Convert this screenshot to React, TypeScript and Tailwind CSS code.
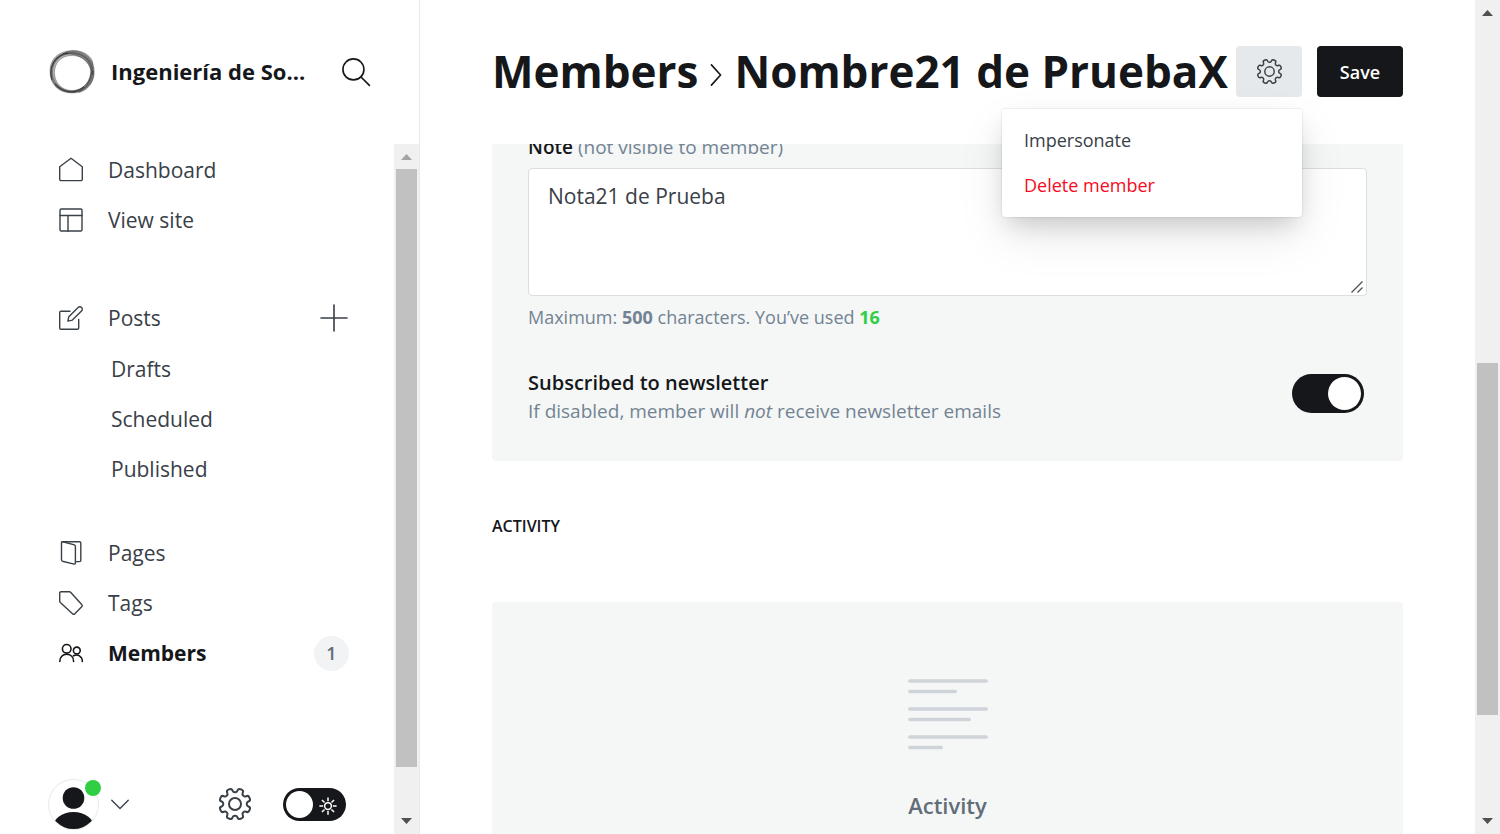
import { useState } from "react";
import type { ReactNode } from "react";

const GEAR_POINTS = Array.from({ length: 8 }, (_, tooth) => {
  const center = 22.5 + tooth * 45;
  return [
    [center - 10, 12],
    [center + 10, 12],
    [center + 14, 8.9],
    [center + 31, 8.9],
  ];
})
  .flat()
  .map(([deg, r]) => {
    const a = (deg * Math.PI) / 180;
    return [12 + r * Math.cos(a), 12 + r * Math.sin(a)];
  });

const GEAR_PATH =
  GEAR_POINTS.map((p, i) => {
    const prev = GEAR_POINTS[(i + 31) % 32];
    const next = GEAR_POINTS[(i + 1) % 32];
    const a = [p[0] + (prev[0] - p[0]) * 0.42, p[1] + (prev[1] - p[1]) * 0.42];
    const b = [p[0] + (next[0] - p[0]) * 0.42, p[1] + (next[1] - p[1]) * 0.42];
    return `${i === 0 ? "M" : "L"}${a[0].toFixed(2)} ${a[1].toFixed(2)}Q${p[0].toFixed(2)} ${p[1].toFixed(2)} ${b[0].toFixed(2)} ${b[1].toFixed(2)}`;
  }).join("") + "Z";

function Icon({ className, width = 1.4, children }: { className: string; width?: number; children: ReactNode }) {
  return (
    <svg
      viewBox="0 0 24 24"
      className={`overflow-visible ${className}`}
      fill="none"
      stroke="currentColor"
      strokeWidth={width}
      strokeLinecap="round"
      strokeLinejoin="round"
      aria-hidden="true"
    >
      {children}
    </svg>
  );
}

function GearIcon({ className, width }: { className: string; width?: number }) {
  return (
    <Icon className={className} width={width}>
      <path d={GEAR_PATH} />
      <circle cx="12" cy="12" r="4.500" />
    </Icon>
  );
}

function Logo() {
  return (
    <svg viewBox="0 0 46 46" className="size-[46px] shrink-0" fill="none" role="img" aria-label="Site logo">
      <g fill="#444" fillRule="evenodd" fillOpacity=".4" stroke="#222" strokeOpacity=".45" strokeWidth=".7">
        <path d="M1 22C1 8 12 1.500 25 1.500c9 0 19 6 19 14 2 6 2 14-3 20-5 6-12 8.500-18 8.500C9 44 1 35 1 22ZM3.500 23C3.500 34 12 42 22.500 42S42 33 42.500 22C42.500 12 34 4.500 23 4.500S3.500 12 3.500 23Z" />
        <path d="M2 26C1 12 9 4 22 3.500c11 0 20 6 21.500 16C45 32 36 43.500 23.500 43.500 12 43.500 3 36 2 26ZM5.500 23.500C5.500 34 13 41.500 23 41.500c9 0 17-6 18.500-17C42.500 13 33 6.500 23 6.500 12 6.500 5.500 14 5.500 23.500Z" />
        <path d="M14 5C22-1 38 2 43.500 14c1 4 1 8 0 12C42 15 33 6 22 5c-3 0-5-.5-8 0Z" />
        <path d="M44.500 22c1 11-6 20-15 21.500C36 39 41.500 33 42 24Z" />
      </g>
      <path d="M3 31C-1 18 6 6 19 4M6 35c8 9 20 10.500 29 3" stroke="#222" strokeWidth="1.300" opacity=".65" />
    </svg>
  );
}

function Scrollbar({ arrowClass, thumb }: { arrowClass: string; thumb: ReactNode }) {
  return (
    <div className="flex w-[25px] shrink-0 flex-col items-center bg-[#f0f0f0]" aria-hidden="true">
      <svg viewBox="0 0 25 25" className="size-[25px] shrink-0">
        <path d="M7 16L12.500 10L18 16Z" className={arrowClass} />
      </svg>
      <div className="flex w-full flex-1 flex-col px-0.5">{thumb}</div>
      <svg viewBox="0 0 25 25" className="size-[25px] shrink-0">
        <path d="M7 9L12.500 15L18 9Z" fill="#505050" />
      </svg>
    </div>
  );
}

function NavItem({ icon, label, active, children }: { icon: ReactNode; label: string; active?: boolean; children?: ReactNode }) {
  return (
    <li className="flex h-[50px] items-center">
      <a
        href="#"
        className={`flex flex-1 items-center gap-6 ${active ? "font-bold text-[#15171a]" : "text-[#394047]"}`}
      >
        {icon}
        <span className="pt-0.5">{label}</span>
      </a>
      {children}
    </li>
  );
}

function Sidebar() {
  const [night, setNight] = useState(false);
  return (
    <aside className="flex w-[420px] shrink-0 flex-col border-r border-[#e6e9eb]">
      <div className="flex h-36 shrink-0 items-center pr-[49px] pl-[49px]">
        <Logo />
        <span className="ml-4 pb-0.5 text-[22px] font-bold whitespace-nowrap text-[#15171a]">Ingeniería de So...</span>
        <button type="button" aria-label="Search" className="ml-auto text-[#15171a]">
          <Icon className="size-7" width={1.4}>
            <circle cx="9.800" cy="9.800" r="9" />
            <path d="M16.300 16.300l7.200 7.200" />
          </Icon>
        </button>
      </div>
      <div className="flex min-h-0 flex-1">
        <div className="flex min-w-0 flex-1 flex-col justify-between">
          <nav className="pr-[45px] pl-[59px] pt-px text-[21px] text-[#394047]">
            <ul>
              <NavItem
                label="Dashboard"
                icon={
                  <Icon className="size-6 mr-px">
                    <path d="M.7 8.700L12 .3l11.300 8.400v12.500a1.400 1.400 0 0 1-1.400 1.400H2.100A1.400 1.400 0 0 1 .7 21.200Z" />
                  </Icon>
                }
              />
              <NavItem
                label="View site"
                icon={
                  <Icon className="size-6 mr-px">
                    <rect x="1" y="1" width="22" height="22" rx="1.200" />
                    <path d="M1 7.500h22M9 7.500V23" />
                  </Icon>
                }
              />
            </ul>
            <ul className="mt-12">
              <NavItem
                label="Posts"
                icon={
                  <Icon className="size-6 mr-px">
                    <path d="M11 5.300H2A1.300 1.300 0 0 0 .7 6.600V22A1.300 1.300 0 0 0 2 23.300h16.400a1.300 1.300 0 0 0 1.300-1.300v-8.500" />
                    <path d="M13.400 14.100l-4.500 1 .9-4.400 9.300-9.200a2.200 2.200 0 0 1 3.400 0 2.200 2.200 0 0 1 0 3.400Z" />
                  </Icon>
                }
              >
                <button type="button" aria-label="New post" className="text-[#394047]">
                  <Icon className="size-[30px]" width={1.3}>
                    <path d="M12 1.600v20.800M1.600 12h20.800" />
                  </Icon>
                </button>
              </NavItem>
              {["Drafts", "Scheduled", "Published"].map((name) => (
                <li key={name} className="flex h-[50px] items-center pt-1 pl-[52px]">
                  <a href="#">{name}</a>
                </li>
              ))}
            </ul>
            <ul className="mt-[35px]">
              <NavItem
                label="Pages"
                icon={
                  <Icon className="size-6 mr-px">
                    <path d="M3 .8h17.500a1.300 1.300 0 0 1 1.300 1.300v17.200a1.300 1.300 0 0 1-1.300 1.300h-4" />
                    <path d="M2.500 1.500A1 1 0 0 1 3.800.8l11.600 3.100a1.400 1.400 0 0 1 1 1.300v16.900a1 1 0 0 1-1.200 1L3.400 20.200a1.300 1.300 0 0 1-.9-1.300Z" />
                  </Icon>
                }
              />
              <NavItem
                label="Tags"
                icon={
                  <Icon className="size-6 mr-px">
                    <path d="M2 .7h8.200a2 2 0 0 1 1.400.6L22.900 13.700a1.300 1.300 0 0 1 0 1.800l-7.300 7.400a1.300 1.300 0 0 1-1.800 0L1.300 11.400a2 2 0 0 1-.6-1.400V2A1.300 1.300 0 0 1 2 .7Z" />
                  </Icon>
                }
              />
              <NavItem
                label="Members"
                active
                icon={
                  <Icon className="size-6 mr-px" width={1.6}>
                    <circle cx="7.700" cy="7.800" r="4.300" />
                    <path d="M.8 20.500c0-4.300 2.800-7.300 6.900-7.300s6.900 3 6.900 7.300" />
                    <circle cx="17.800" cy="9.500" r="3.400" />
                    <path d="M14.500 14.800c4.200-2.200 8.800.5 8.800 5.700" />
                  </Icon>
                }
              >
                <span className="flex size-[35px] items-center justify-center rounded-full bg-[#f1f3f4] text-lg font-semibold text-[#626d79]">
                  1
                </span>
              </NavItem>
            </ul>
          </nav>
          <div className="flex h-[60px] items-center pr-12 pl-12">
            <button type="button" aria-label="Account" className="flex items-center gap-3 text-[#394047]">
              <span className="relative block">
                <svg viewBox="0 0 51 51" className="size-[51px]" aria-hidden="true">
                  <clipPath id="avatar-clip">
                    <circle cx="25.500" cy="25.500" r="24.500" />
                  </clipPath>
                  <circle cx="25.500" cy="25.500" r="25" fill="#fff" stroke="#e6e9eb" />
                  <g fill="#15171a" clipPath="url(#avatar-clip)">
                    <circle cx="25.500" cy="19" r="10.800" />
                    <ellipse cx="25.500" cy="49" rx="21" ry="16" />
                  </g>
                </svg>
                <span className="absolute -right-0.5 top-px size-4 rounded-full bg-[#30cf43]" />
              </span>
              <Icon className="size-[18px]" width={1.8}>
                <path d="M1 7l11 11L23 7" />
              </Icon>
            </button>
            <button type="button" aria-label="Settings" className="mr-8 ml-auto text-[#394047]">
              <GearIcon className="size-8" width={1.5} />
            </button>
            <label className="flex h-[33px] w-[63px] cursor-pointer items-center justify-between rounded-full bg-[#15171a] px-[3px] has-focus-visible:ring-2">
              <input
                type="checkbox"
                className="sr-only"
                aria-label="Night shift"
                checked={night}
                onChange={(e) => setNight(e.target.checked)}
              />
              <span className="size-[27px] rounded-full bg-white" />
              <Icon className="mt-[3px] mr-1.5 size-[18px] text-white" width={2}>
                <circle cx="12" cy="12" r="4.500" />
                <path
                  strokeLinecap="butt"
                  d="M12 .5v5M12 18.500v5M.5 12h5M18.500 12h5M3.900 3.900l3.500 3.500M16.600 16.600l3.500 3.500M3.900 20.100l3.500-3.500M16.600 7.400l3.500-3.500"
                />
              </Icon>
            </label>
          </div>
        </div>
        <Scrollbar arrowClass="fill-[#a3a3a3]" thumb={<div className="h-[598px] bg-[#c1c1c1]" />} />
      </div>
    </aside>
  );
}

function Header() {
  return (
    <header className="flex h-36 shrink-0 items-center justify-between px-[72px] pb-0.5">
      <h1 className="flex items-center text-[44px] font-bold whitespace-nowrap text-[#15171a]">
        <a href="#">Members</a>
        <Icon className="mx-[7px] mt-2 size-[22px] shrink-0" width={1.8}>
          <path d="M7 1l10 11L7 23" />
        </Icon>
        <span>Nombre21 de PruebaX</span>
      </h1>
      <div className="flex gap-[15px]">
        <div className="relative">
          <button
            type="button"
            aria-label="Member actions"
            aria-expanded="true"
            className="flex h-[51px] w-[66px] items-center justify-center rounded bg-[#e6e9eb] text-[#394047]"
          >
            <GearIcon className="size-[25px]" width={1.4} />
          </button>
          <ul className="absolute top-full right-0 z-10 mt-3 w-[300px] rounded bg-white py-[9px] text-lg text-[#394047] shadow-[0_0_1px_1px_rgba(0,0,0,0.06),0_12px_24px_-6px_rgba(0,0,0,0.18),0_20px_50px_rgba(0,0,0,0.08)]">
            <li>
              <button type="button" className="h-[45px] w-full px-[22px] text-left">
                Impersonate
              </button>
            </li>
            <li>
              <button type="button" className="h-[45px] w-full px-[22px] text-left text-[#f50b23]">
                Delete member
              </button>
            </li>
          </ul>
        </div>
        <button type="button" className="h-[51px] w-[86px] rounded bg-[#15171a] pt-0.5 text-lg font-semibold text-white">
          Save
        </button>
      </div>
    </header>
  );
}

function MemberForm() {
  const [note, setNote] = useState("Nota21 de Prueba");
  const [subscribed, setSubscribed] = useState(true);
  return (
    <section className="-mt-9 rounded bg-[#f4f7f6] px-9 pt-[27px] pb-9 text-lg text-[#738393]">
      <label htmlFor="note" className="block text-[19px] leading-6">
        <span className="font-semibold text-[#15171a]">Note</span> (not visible to member)
      </label>
      <div className="relative mt-[9px]">
        <textarea
          id="note"
          value={note}
          onChange={(e) => setNote(e.target.value)}
          className="block h-32 w-full resize-none rounded border border-[#dddedf] bg-white px-[19px] py-[11px] text-[21px] leading-8 text-[#394047] outline-none"
        />
        <svg viewBox="0 0 12 12" className="pointer-events-none absolute right-1 bottom-[3px] size-3" aria-hidden="true">
          <path d="M.5 11.500l11-11M6.500 11.500l5-5" stroke="#505050" strokeWidth="1.300" />
        </svg>
      </div>
      <p className="mt-[9px] leading-6">
        Maximum: <b>500</b> characters. You’ve used <b className="text-[#30cf43]">{note.length}</b>
      </p>
      <div className="mt-10 flex items-center justify-between">
        <div>
          <h2 className="text-xl leading-7 font-semibold text-[#15171a]">Subscribed to newsletter</h2>
          <p className="text-[19px] leading-7">
            If disabled, member will <em>not</em> receive newsletter emails
          </p>
        </div>
        <label className="-mt-2 mr-[3px] flex h-[39px] w-[72px] cursor-pointer items-center justify-end rounded-full bg-[#15171a] px-[3px] has-focus-visible:ring-2">
          <input
            type="checkbox"
            className="sr-only"
            aria-label="Subscribed to newsletter"
            checked={subscribed}
            onChange={(e) => setSubscribed(e.target.checked)}
          />
          <span className="size-[33px] rounded-full bg-white" />
        </label>
      </div>
    </section>
  );
}

export default function App() {
  return (
    <div className="flex h-screen overflow-hidden bg-white font-['Open_Sans','Noto_Sans',sans-serif]">
      <Sidebar />
      <main className="flex min-w-0 flex-1 flex-col">
        <Header />
        <div className="min-h-0 flex-1 overflow-hidden px-[72px]">
          <MemberForm />
          <h2 className="mt-[53px] text-base leading-6 font-semibold text-[#15171a]">ACTIVITY</h2>
          <section className="mt-16 flex flex-col items-center rounded bg-[#f4f7f6] pt-[76px] pb-20">
            <svg viewBox="0 0 80 72" className="h-[72px] w-20" stroke="#ced4d9" strokeWidth="3.600" strokeLinecap="round" aria-hidden="true">
              <path d="M1.800 3h76.400M1.800 13.500h45.400M1.800 31h76.400M1.800 41.500h59.400M1.800 59h76.400M1.800 69.500h31.400" />
            </svg>
            <h3 className="mt-[39px] text-[22px] leading-8 font-semibold text-[#626d79]">Activity</h3>
          </section>
        </div>
      </main>
      <Scrollbar arrowClass="fill-[#505050]" thumb={<div className="mt-[338px] h-[352px] bg-[#c1c1c1]" />} />
    </div>
  );
}
